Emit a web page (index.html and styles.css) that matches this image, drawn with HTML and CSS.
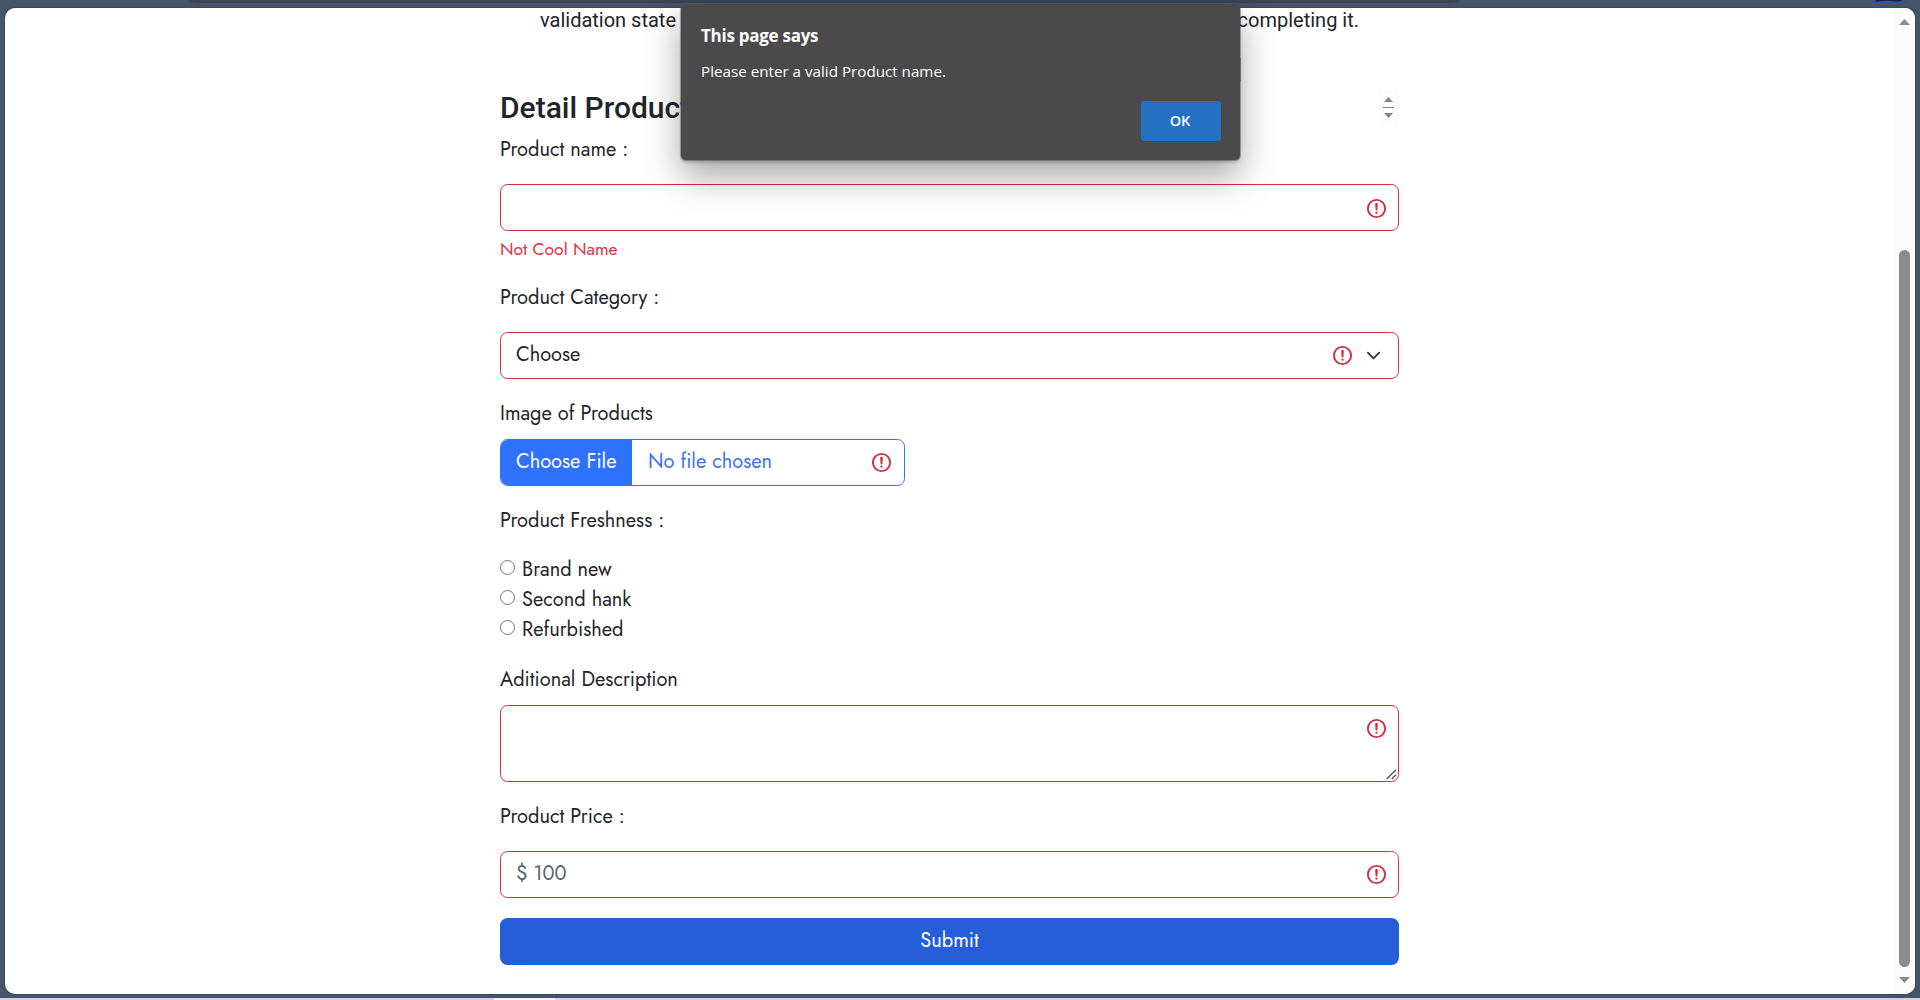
FILE: index.html
```
<!DOCTYPE html>
<html lang="en">
<head>
<meta charset="utf-8">
<title>Detail Product</title>
<link rel="stylesheet" href="styles.css">
</head>
<body>
<svg width="0" height="0" class="defs"><symbol id="alert" viewBox="0 0 12 12"><circle cx="6" cy="6" r="4.5" fill="none" stroke="#d23040"/><path fill="#d23040" stroke="#d23040" stroke-linejoin="round" stroke-width="1" d="M5.8 3.6h.4L6 6.5z"/><circle cx="6" cy="8.2" r=".6" fill="#d23040"/></symbol></svg>
<div class="toolbar-pill"></div>
<svg class="avatar" width="32" height="4" viewBox="0 0 32 4"><path d="M0 0h30c-1 1-3 2.500-6 2.500-4 0-7-1.500-12-1-4 .3-7 1.500-11 1.200z" fill="#182238"/><path d="M1 0v2.500c5 0 8-1.200 13-1 5 .3 9 1.500 13 .5l3-2" fill="none" stroke="#2b50e0" stroke-width="1.400"/></svg>
<div class="page">
  <main class="content">
    <p class="intro"><span>validation state</span><span>completing it.</span></p>
    <div class="heading">
      <h1>Detail Product</h1>
      <svg class="spinner" width="21" height="35" viewBox="0 0 21 35"><path d="M6 12l4.500-5 4.500 5zM6 23l4.500 5 4.500-5zM5 17h11v1H5z" fill="#858585"/></svg>
    </div>
    <div class="label">Product name :</div>
    <div class="field spaced"><svg class="alert"><use href="#alert"/></svg></div>
    <div class="feedback">Not Cool Name</div>
    <div class="label">Product Category :</div>
    <div class="field spaced select"><span>Choose</span><svg class="alert"><use href="#alert"/></svg><svg class="chevron" viewBox="0 0 16 16"><path d="m2 5 6 6 6-6" fill="none" stroke="#343a40" stroke-width="2" stroke-linecap="round" stroke-linejoin="round"/></svg></div>
    <div class="label image-label">Image of Products</div>
    <div class="field file"><span class="choose">Choose File</span><span>No file chosen</span><svg class="alert"><use href="#alert"/></svg></div>
    <div class="label fresh-label">Product Freshness :</div>
    <div class="radios">
      <div class="radio"><i></i>Brand new</div>
      <div class="radio"><i></i>Second hank</div>
      <div class="radio"><i></i>Refurbished</div>
    </div>
    <div class="label">Aditional Description</div>
    <div class="field area"><svg class="alert"><use href="#alert"/></svg><svg class="grip" width="11" height="11" viewBox="0 0 11 11"><path d="M.7 10 10 .7M5.700 10 10 5.700" stroke="#555" stroke-width="1.400"/></svg></div>
    <div class="label price-label">Product Price :</div>
    <div class="field spaced price"><span>$ 100</span><svg class="alert"><use href="#alert"/></svg></div>
    <div class="submit">Submit</div>
  </main>
  <div class="scrollbar">
    <svg width="11" height="6" viewBox="0 0 11 6"><path d="M0 6 5.500 0 11 6z" fill="#8b8b8b"/></svg>
    <div class="thumb"></div>
    <svg width="11" height="6" viewBox="0 0 11 6"><path d="M0 0 5.500 6 11 0z" fill="#8b8b8b"/></svg>
  </div>
</div>
<div class="taskbar"><div class="active"></div></div>
<div class="dialog">
  <div class="title">This page says</div>
  <div class="message">Please enter a valid Product name.</div>
  <div class="ok">OK</div>
  <div class="edge"></div>
</div>
</body>
</html>
```
FILE: styles.css
```
* { box-sizing: border-box; }
body {
  margin: 0;
  height: 1000px;
  overflow: hidden;
  position: relative;
  padding: 8px 5px 0;
  background: #45546a;
  color: #212529;
  font: 20px/32px Jost, Lato, sans-serif;
}
.defs { position: absolute; }
.toolbar-pill {
  position: absolute;
  top: -31px;
  left: 180px;
  width: 1288px;
  height: 34px;
  border-radius: 17px;
  background: #384354;
}
.avatar { position: absolute; left: 1874px; top: 0; }
.page {
  height: 986px;
  display: flex;
  justify-content: space-between;
  border-radius: 10px;
  overflow: hidden;
  background: #fff;
  box-shadow: 0 0 1px 1px #3c495c;
}
.content { width: 899px; margin-left: 495px; }
.intro {
  display: flex;
  justify-content: space-between;
  margin: 0;
  padding: 0 40px;
  font: 20px/24px Roboto, sans-serif;
}
.heading {
  display: flex;
  justify-content: space-between;
  height: 36px;
  margin: 58px 0 8px;
}
h1 { margin: 0; font: 500 30px/36px Roboto, sans-serif; }
.spinner { background: #fcfcfc; }
.label { height: 30px; }
.field {
  display: flex;
  height: 47px;
  padding: 6px 12px 0 15px;
  border: 1px solid #d23040;
  border-radius: 7.5px;
}
.spaced { margin-top: 20px; }
.alert { width: 23px; height: 23px; margin: 6px -2px 0 auto; flex: none; }
.feedback {
  height: 26px;
  margin: 5px 0 20px;
  color: #dc3545;
  font-size: 17.5px;
  line-height: 26px;
}
.select { padding-right: 15px; }
.select .alert { margin-right: 12px; margin-top: 5px; }
.chevron { width: 15px; height: 15px; margin: 9px 2px 0 0; }
.image-label { margin: 19px 0 11px; }
.file {
  width: 405px;
  padding: 0 12px 0 0;
  border-color: #2f72ff;
  color: #3d6ff5;
  overflow: hidden;
}
.file span { padding-top: 6px; }
.file .choose {
  width: 131px;
  margin-right: 16px;
  padding-left: 15px;
  color: #fff;
  background: #2f72ff;
}
.file .alert { margin-top: 11px; margin-right: -1px; }
.fresh-label { margin: 19px 0; }
.radios { margin-bottom: 20px; }
.radio { display: flex; height: 30px; }
.radio i {
  width: 15px;
  height: 15px;
  margin: 6px 7px 0 0;
  border: 1px solid #767676;
  border-radius: 50%;
}
.area { position: relative; height: 77px; margin: 11px 0 19px; }
.area .alert { margin-top: 5px; }
.grip { position: absolute; right: 1px; bottom: 1px; }
.price { color: #5c636a; }
.price .alert { margin-top: 5px; }
.submit {
  height: 47px;
  margin-top: 20px;
  padding-top: 7px;
  border-radius: 7.5px;
  background: #265dd8;
  color: #fff;
  text-align: center;
}
.scrollbar {
  display: flex;
  flex-direction: column;
  width: 21px;
  padding: 11px 5px;
  background: #fcfcfc;
}
.thumb {
  width: 11px;
  height: 717px;
  margin: 225px 0 10px;
  border-radius: 6px;
  background: #8b8b8b;
}
.taskbar {
  height: 2px;
  margin: 4px -5px 0;
  padding-left: 494px;
  background: #d0d4dd;
}
.active { width: 61px; height: 2px; background: #f3f4f8; }
.dialog {
  position: absolute;
  left: 681px;
  top: 4px;
  width: 559px;
  height: 156px;
  padding: 20px 19px 19px 20px;
  display: flex;
  flex-direction: column;
  border-radius: 5px;
  background: #4a4a4a;
  box-shadow: 0 0 0 1px rgba(90, 90, 90, .45), 0 2px 3px rgba(0, 0, 0, .25), 0 16px 36px rgba(0, 0, 0, .36);
  color: #fff;
  font-family: "Open Sans", "Noto Sans", sans-serif;
}
.title { font-size: 17px; line-height: 24px; font-weight: 700; letter-spacing: -.27px; }
.message { margin-top: 12px; font-size: 15.2px; line-height: 22px; }
.ok {
  width: 80px;
  height: 40px;
  margin: auto 0 0 auto;
  padding-right: 2px;
  border-radius: 3px;
  background: #2470c4;
  font-size: 14.5px;
  font-weight: 600;
  line-height: 39px;
  text-align: center;
}
.edge {
  position: absolute;
  left: 559px;
  top: 54px;
  width: 1px;
  height: 23px;
  background: #6a6a6a;
}
```
